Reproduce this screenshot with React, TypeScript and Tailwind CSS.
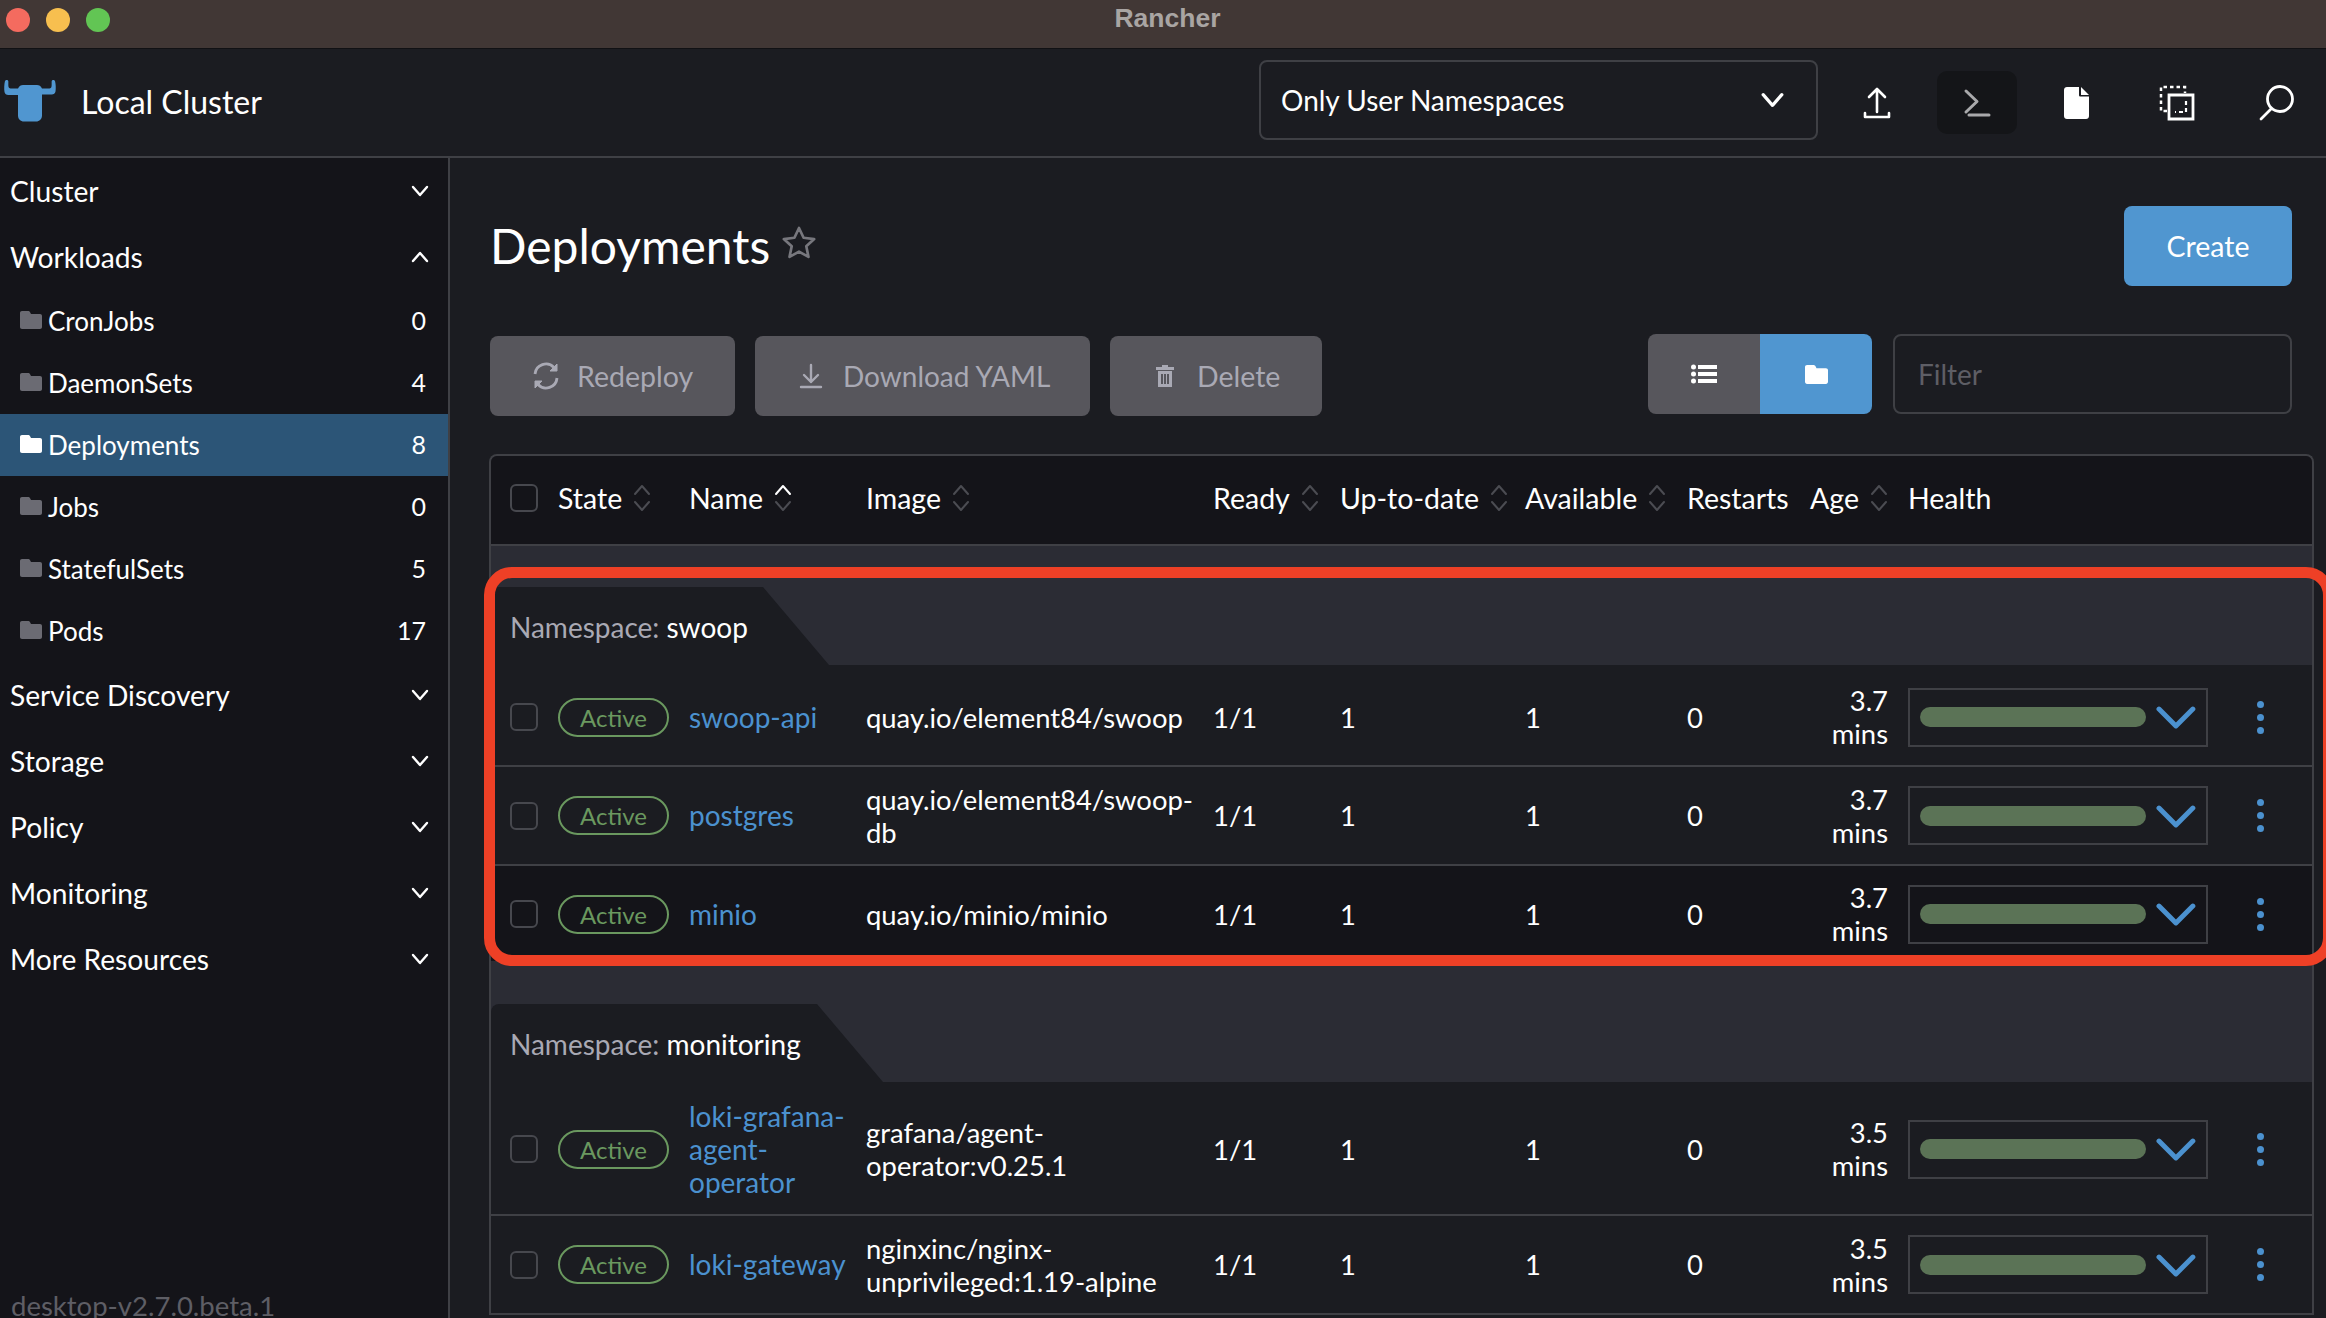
import type { ReactNode } from "react";

const GRID =
  "grid grid-cols-[67px_131px_177px_347px_127px_185px_162px_123px_98px_302px_1fr] items-center";

const sideTop = ["Cluster"];
const sideSub = [
  { name: "CronJobs", count: 0 },
  { name: "DaemonSets", count: 4 },
  { name: "Deployments", count: 8, active: true },
  { name: "Jobs", count: 0 },
  { name: "StatefulSets", count: 5 },
  { name: "Pods", count: 17 },
];
const sideBottom = ["Service Discovery", "Storage", "Policy", "Monitoring", "More Resources"];

const columns = [
  { label: "State", sort: "none" },
  { label: "Name", sort: "up" },
  { label: "Image", sort: "none" },
  { label: "Ready", sort: "none" },
  { label: "Up-to-date", sort: "none" },
  { label: "Available", sort: "none" },
  { label: "Restarts" },
  { label: "Age", sort: "none" },
  { label: "Health" },
];

function Chevron({ up, className }: { up?: boolean; className?: string }) {
  return (
    <svg viewBox="0 0 18 12" fill="none" className={className}>
      <path
        d={up ? "M2 10l7-8 7 8" : "M2 2l7 8 7-8"}
        stroke="currentColor"
        strokeWidth="2.4"
        strokeLinecap="round"
        strokeLinejoin="round"
      />
    </svg>
  );
}

function Sort({ state }: { state: string }) {
  return (
    <svg viewBox="0 0 18 28" fill="none" className="ml-[11px] h-[28px] w-[18px]">
      <path
        d="M2 10l7-8 7 8"
        stroke={state === "up" ? "#ffffff" : "#4b4c52"}
        strokeWidth="2"
        strokeLinecap="round"
        strokeLinejoin="round"
      />
      <path d="M2 18l7 8 7-8" stroke="#4b4c52" strokeWidth="2" strokeLinecap="round" strokeLinejoin="round" />
    </svg>
  );
}

function Folder({ className }: { className?: string }) {
  return (
    <svg viewBox="0 0 22 18" className={className}>
      <path
        d="M2 0h6c1 0 1.600.5 2.200 1.400L11 3h9c1.200 0 2 .8 2 2v11c0 1.200-.8 2-2 2H2c-1.200 0-2-.8-2-2V2C0 .8.800 0 2 0z"
        fill="currentColor"
      />
    </svg>
  );
}

function Logo() {
  return (
    <svg viewBox="0 0 58 50" className="ml-[1px] h-[50px] w-[58px]">
      <path
        d="M4 6c.5-1.500 3-1.500 3.300 0 .2 2-.3 5 .5 6.500.8 1.200 2 1 3.200 1H17c1-2.500 3-3.500 5-3.500h14c2 0 4 1 5 3.500h6c1.200 0 2.400.2 3.200-1 .8-1.500.3-4.500.5-6.500.3-1.500 2.800-1.500 3.300 0 .8 3 1 7.500.5 10.500-.4 2-1.800 3-3.800 3H41v21c0 3.500-2.500 6-6 6H23c-3.500 0-6-2.500-6-6V20H7.300c-2 0-3.400-1-3.800-3C3 14 3.200 9 4 6z"
        fill="#5096d0"
        transform="translate(0 -3)"
      />
    </svg>
  );
}

function SideGroup({ label, up }: { label: string; up?: boolean }) {
  return (
    <div className="flex h-[66px] items-center justify-between pl-[10px] pr-[19px] text-[28.200px] text-white">
      <span>{label}</span>
      <Chevron up={up} className="h-[12px] w-[18px]" />
    </div>
  );
}

function Sidebar() {
  return (
    <aside className="relative flex w-[450px] shrink-0 flex-col border-r-2 border-[#3f4045] bg-[#141419]">
      {sideTop.map((s) => (
        <SideGroup key={s} label={s} />
      ))}
      <SideGroup label="Workloads" up />
      {sideSub.map((item) => (
        <div
          key={item.name}
          className={`flex h-[62px] items-center justify-between pl-[20px] pr-[22px] text-[26px] text-white ${
            item.active ? "bg-[#2c5577]" : ""
          }`}
        >
          <span className="flex items-center gap-[6px]">
            <Folder className={`mb-[3px] h-[18px] w-[22px] ${item.active ? "text-white" : "text-[#6b6b73]"}`} />
            {item.name}
          </span>
          <span className="text-[25px]">{item.count}</span>
        </div>
      ))}
      {sideBottom.map((s) => (
        <SideGroup key={s} label={s} />
      ))}
      <div className="absolute left-[11px] top-[1127px] text-[27.500px] text-[#5e5e65]">desktop-v2.7.0.beta.1</div>
    </aside>
  );
}

function HeaderIcon({ children, active }: { children: ReactNode; active?: boolean }) {
  return (
    <div
      className={`flex h-[63px] w-[80px] items-center justify-center rounded-[10px] ${
        active ? "bg-[#141518]" : ""
      }`}
    >
      {children}
    </div>
  );
}

function TopBar() {
  return (
    <header className="flex h-[109px] shrink-0 items-center border-b-2 border-[#3f4045] bg-[#1b1c21] pr-[9px]">
      <Logo />
      <span className="mb-[2px] ml-[22px] text-[32px] text-white">Local Cluster</span>
      <div className="mb-[5px] ml-auto flex h-[80px] w-[559px] items-center justify-between rounded-[8px] border-2 border-[#3f4045] pl-[20px] pr-[30px] text-[28px] text-white">
        Only User Namespaces
        <Chevron className="h-[16px] w-[27px]" />
      </div>
      <div className="ml-[19px] flex gap-[20px]">
        <HeaderIcon>
          <svg viewBox="0 0 28 32" fill="none" stroke="#fff" strokeWidth="2.600" strokeLinecap="round" strokeLinejoin="round" className="h-[32px] w-[28px]">
            <path d="M14 2v23M6 10l8-8 8 8M2 26v4h24v-4" />
          </svg>
        </HeaderIcon>
        <HeaderIcon active>
          <svg viewBox="0 0 28 32" fill="none" stroke="#a9a9ab" strokeWidth="3" strokeLinecap="round" strokeLinejoin="round" className="h-[32px] w-[28px]">
            <path d="M3 4l11 10.500L3 25M6 28h20" />
          </svg>
        </HeaderIcon>
        <HeaderIcon>
          <svg viewBox="0 0 26 32" className="h-[32px] w-[26px]">
            <path d="M3 0h12v8c0 1 .6 1.600 1.600 1.600H25V29c0 1.700-1.300 3-3 3H3c-1.700 0-3-1.300-3-3V3c0-1.700 1.300-3 3-3zM17 0l8 8h-8z" fill="#fff" />
          </svg>
        </HeaderIcon>
        <HeaderIcon>
          <svg viewBox="0 0 36 36" fill="none" stroke="#fff" className="h-[36px] w-[36px]">
            <path d="M8 26H2V2h24v6" strokeWidth="2.500" strokeDasharray="3.500 3" />
            <path d="M10 10h24v24H10z" strokeWidth="2.800" />
            <path d="M27 16v11H16" strokeWidth="2.200" strokeDasharray="4 3" />
          </svg>
        </HeaderIcon>
        <HeaderIcon>
          <svg viewBox="0 0 36 36" fill="none" stroke="#fff" strokeWidth="2.800" strokeLinecap="round" className="h-[36px] w-[36px]">
            <circle cx="21" cy="14" r="12.500" />
            <path d="M12 24L2 34" />
          </svg>
        </HeaderIcon>
      </div>
    </header>
  );
}

function ActionButton({ icon, label, className }: { icon: ReactNode; label: string; className: string }) {
  return (
    <button
      type="button"
      className={`flex h-[80px] items-center rounded-[8px] bg-[#57565c] text-[#a9a9b4] ${className}`}
    >
      {icon}
      {label}
    </button>
  );
}

function Toolbar() {
  return (
    <div className="mt-[48px] flex items-start pr-[22px]">
      <div className="ml-[1px] mt-[2px] flex gap-[20px]">
        <ActionButton
          label="Redeploy"
          className="w-[245px] pl-[42px] text-[28.500px]"
          icon={
            <svg viewBox="0 0 28 28" fill="none" stroke="#a9a9b4" strokeWidth="2.800" className="mr-[17px] h-[28px] w-[28px]">
              <path d="M3 12a11 11 0 0 1 19-6.500M25 16a11 11 0 0 1-19 6.500" />
              <path d="M25 2v7h-7zM3 26v-7h7z" fill="#a9a9b4" strokeWidth="1" />
            </svg>
          }
        />
        <ActionButton
          label="Download YAML"
          className="w-[335px] pl-[44px] text-[28px]"
          icon={
            <svg viewBox="0 0 24 26" fill="none" stroke="#a9a9b4" strokeWidth="2.400" strokeLinecap="round" strokeLinejoin="round" className="mr-[20px] h-[26px] w-[24px]">
              <path d="M12 2v17M5 12l7 7 7-7M2 24h20" />
            </svg>
          }
        />
        <ActionButton
          label="Delete"
          className="w-[212px] pl-[46px] text-[28.500px]"
          icon={
            <svg viewBox="0 0 18 22" className="mr-[23px] h-[22px] w-[18px]">
              <path d="M6 0h6v2h6v3H0V2h6zM2 6h14v16H2zM5 9v10h2V9zM8 9v10h2V9zM11 9v10h2V9z" fill="#a9a9b4" fillRule="evenodd" />
            </svg>
          }
        />
      </div>
      <div className="ml-auto flex h-[80px] w-[224px] overflow-hidden rounded-[8px]">
        <div className="flex w-[112px] items-center justify-center bg-[#57565c]">
          <svg viewBox="0 0 26 20" fill="#fff" className="h-[20px] w-[26px]">
            <circle cx="2.500" cy="3" r="2.500" />
            <circle cx="2.500" cy="10" r="2.500" />
            <circle cx="2.500" cy="17" r="2.500" />
            <path d="M7 1h19v4H7zM7 8h19v4H7zM7 15h19v4H7z" />
          </svg>
        </div>
        <div className="flex w-[112px] items-center justify-center bg-[#5096d0]">
          <Folder className="h-[19px] w-[23px] text-white" />
        </div>
      </div>
      <div className="ml-[21px] flex h-[80px] w-[399px] items-center rounded-[8px] border-2 border-[#3f4045] pl-[23px] text-[28px] text-[#5e5e65]">
        Filter
      </div>
    </div>
  );
}

function Row({
  name,
  image,
  age,
  h,
  dark,
  last,
}: {
  name: string;
  image: string;
  age: string;
  h: string;
  dark?: boolean;
  last?: boolean;
}) {
  return (
    <div
      className={`${GRID} ${h} text-[27.400px] leading-[33px] text-white ${dark ? "bg-[#141419]" : "bg-[#1b1c21]"} ${
        last ? "" : "border-b-2 border-[#3f4045]"
      }`}
    >
      <div className="pl-[19px]">
        <div className="h-[28px] w-[28px] rounded-[6px] border-2 border-[#47484e]" />
      </div>
      <div>
        <span className="flex h-[39px] w-[111px] items-center justify-center rounded-full border-2 border-[#6a985f] text-[24px] text-[#6a985f]">
          Active
        </span>
      </div>
      <div className="pr-[6px] text-[28px] text-[#4b91cf]">{name}</div>
      <div className="pr-[14px]">{image}</div>
      <div>1/1</div>
      <div>1</div>
      <div>1</div>
      <div>0</div>
      <div className="pr-[20px] text-right [grid-column:9]">
        {age}
        <br />
        mins
      </div>
      <div className="flex h-[59px] w-[300px] items-center border-2 border-[#3f4045] pl-[10px] pr-[10px]">
        <div className="h-[20px] w-[227px] rounded-full bg-[#5b7356]" />
        <svg viewBox="0 0 40 26" fill="none" className="ml-[10px] h-[26px] w-[40px]">
          <path d="M3 5l17 17L37 5" stroke="#4b91cf" strokeWidth="5" strokeLinecap="round" strokeLinejoin="round" />
        </svg>
      </div>
      <div className="flex flex-col items-center gap-[6px] pr-[2px]">
        <span className="h-[7px] w-[7px] rounded-full bg-[#4b91cf]" />
        <span className="h-[7px] w-[7px] rounded-full bg-[#4b91cf]" />
        <span className="h-[7px] w-[7px] rounded-full bg-[#4b91cf]" />
      </div>
    </div>
  );
}

function GroupTab({ value, clip }: { value: string; clip: string }) {
  return (
    <div className={`flex h-[78px] items-center rounded-tl-[8px] bg-[#1b1c21] pl-[19px] pt-[2px] text-[28px] ${clip}`}>
      <span className="text-[#a9a9b4]">Namespace:&nbsp;</span>
      <span className="text-white">{value}</span>
    </div>
  );
}

function DeploymentsTable() {
  return (
    <div className="mt-[38px] overflow-hidden rounded-t-[8px] border-x-2 border-t-2 border-[#3f4045] bg-[#2b2c34]">
      <div className={`${GRID} h-[90px] border-b-2 border-[#3f4045] bg-[#141419] pb-[4px] text-[28.500px] text-white`}>
        <div className="pl-[19px]">
          <div className="h-[28px] w-[28px] rounded-[6px] border-2 border-[#47484e]" />
        </div>
        {columns.map((c) => (
          <div key={c.label} className="flex items-center whitespace-nowrap">
            {c.label}
            {c.sort && <Sort state={c.sort} />}
          </div>
        ))}
      </div>
      <div className="pt-[41px]">
        <GroupTab value="swoop" clip="w-[338px] [clip-path:polygon(0_0,272px_0,338px_100%,0_100%)]" />
        <Row name="swoop-api" image="quay.io/element84/swoop" age="3.7" h="h-[102px] pt-[4px]" />
        <Row name="postgres" image="quay.io/element84/swoop-db" age="3.7" h="h-[99px]" />
        <Row name="minio" image="quay.io/minio/minio" age="3.7" h="h-[95px] pt-[1px]" dark last />
      </div>
      <div className="pt-[43px]">
        <GroupTab value="monitoring" clip="w-[392px] [clip-path:polygon(0_0,326px_0,392px_100%,0_100%)]" />
        <Row name="loki-grafana-agent-operator" image="grafana/agent-operator:v0.25.1" age="3.5" h="h-[134px] pt-[2px]" />
        <Row name="loki-gateway" image="nginxinc/nginx-unprivileged:1.19-alpine" age="3.5" h="h-[99px]" />
      </div>
    </div>
  );
}

export default function App() {
  return (
    <div className="relative flex h-screen w-full flex-col overflow-hidden bg-[#1b1c21] [font-family:Lato,sans-serif]">
      <div className="relative flex h-[49px] shrink-0 items-start gap-[16px] border-b border-[#111114] bg-[#413735] pl-[6px] pt-[8px]">
        <span className="h-[24px] w-[24px] rounded-full bg-[#f46b5f]" />
        <span className="h-[24px] w-[24px] rounded-full bg-[#f7bf4f]" />
        <span className="h-[24px] w-[24px] rounded-full bg-[#62c554]" />
        <span className="absolute inset-x-0 top-0 flex h-[38px] items-center justify-center pl-[9px] text-[26.500px] font-bold text-[#a9a5a3] [font-family:'Liberation_Sans',sans-serif]">
          Rancher
        </span>
      </div>
      <TopBar />
      <div className="flex min-h-0 flex-1">
        <Sidebar />
        <main className="min-w-0 flex-1 overflow-hidden pl-[39px] pr-[12px] pt-[48px]">
          <div className="flex items-start justify-between pr-[22px]">
            <h1 className="ml-[1px] mt-[13px] flex items-center text-[48px] leading-[54px] text-white">
              Deployments
              <svg viewBox="0 0 24 24" fill="none" stroke="#77777d" strokeWidth="1.700" strokeLinejoin="round" className="mb-[6px] ml-[10px] h-[38px] w-[38px]">
                <path d="M12 2.500l2.900 6.200 6.700.8-5 4.600 1.400 6.700-6-3.400-6 3.400 1.400-6.700-5-4.600 6.700-.8z" />
              </svg>
            </h1>
            <button type="button" className="h-[80px] w-[168px] rounded-[8px] bg-[#5096d0] text-[28.500px] text-white">
              Create
            </button>
          </div>
          <Toolbar />
          <DeploymentsTable />
        </main>
      </div>
      <div className="pointer-events-none absolute left-[484px] top-[567px] h-[399px] w-[1850px] rounded-[28px] border-[11px] border-[#ee4026]" />
    </div>
  );
}
